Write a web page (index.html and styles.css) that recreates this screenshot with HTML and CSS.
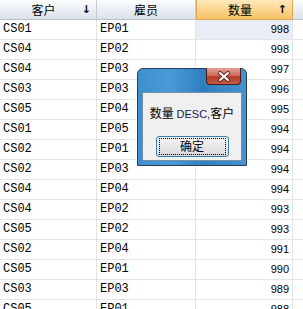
FILE: index.html
```html
<!DOCTYPE html>
<html lang="zh">
<head>
  <meta charset="UTF-8" />
  <title>Grid sort</title>
  <link rel="stylesheet" href="styles.css">
</head>
<body>

  <div class="grid">
    <div class="head">
      <div class="hcell"><span class="label">客户</span><span class="arrow">&#8595;</span></div>
      <div class="hcell"><span class="label">雇员</span></div>
      <div class="hcell sorted"><span class="label">数量</span><span class="arrow">&#8593;</span></div>
      <div class="hcell filler"></div>
    </div>
    <div id="rows"></div>
  </div>

  <div class="msgbox">
    <div class="titlebar">
      <div class="close">
        <svg width="14" height="11" viewBox="0 0 14 11">
          <path d="M3 2 L11 9 M11 2 L3 9" stroke="#6b2a22" stroke-width="4" stroke-linecap="round"/>
          <path d="M3 2 L11 9 M11 2 L3 9" stroke="#fff" stroke-width="2" stroke-linecap="round"/>
        </svg>
      </div>
    </div>
    <div class="msgbody">
      <div class="msgtext">数量 <span class="latin">DESC,</span>客户</div>
      <button class="okbtn"><span>确定</span></button>
    </div>
  </div>

  <script>
    const data = [
      ['CS01', 'EP01', 998],
      ['CS04', 'EP02', 998],
      ['CS04', 'EP03', 997],
      ['CS03', 'EP03', 996],
      ['CS05', 'EP04', 995],
      ['CS01', 'EP05', 994],
      ['CS02', 'EP01', 994],
      ['CS02', 'EP03', 994],
      ['CS04', 'EP04', 994],
      ['CS04', 'EP02', 993],
      ['CS05', 'EP02', 993],
      ['CS02', 'EP04', 991],
      ['CS05', 'EP01', 990],
      ['CS03', 'EP03', 989],
      ['CS05', 'EP01', 988]
    ];

    const rows = document.getElementById('rows');
    data.forEach((r, i) => {
      const row = document.createElement('div');
      row.className = 'row';
      row.innerHTML =
        '<div class="cell">' + r[0] + '</div>' +
        '<div class="cell">' + r[1] + '</div>' +
        '<div class="cell num' + (i === 0 ? ' current' : '') + '">' + r[2] + '</div>' +
        '<div class="cell filler"></div>';
      rows.appendChild(row);
    });
  </script>

</body>
</html>
```

FILE: styles.css
```css
body {
  margin: 0;
  padding: 0;
  background: #fff;
  font-family: 'Noto Sans CJK SC', sans-serif;
  overflow: hidden;
}
.grid {
  width: 303px;
}
.head, .row {
  display: grid;
  grid-template-columns: 97px 99px 97px 10px;
}
.head {
  height: 20px;
}
.hcell {
  display: flex;
  align-items: center;
  box-sizing: border-box;
  padding: 0 5px;
  border-right: 1px solid #c5ccd6;
  border-bottom: 1px solid #b7c0cc;
  background: linear-gradient(#fdfdfe, #e9edf3 55%, #dde3eb);
  font-size: 12px;
  color: #000;
}
.hcell .label {
  flex: 1;
  text-align: center;
}
.hcell .arrow {
  font-family: 'DejaVu Sans', sans-serif;
  font-size: 11px;
  font-weight: bold;
}
.hcell.sorted {
  background: linear-gradient(#fde8bd, #fbd58e 50%, #f6c267);
  border-color: #e2a64d;
  border-left: 1px solid #e2a64d;
}
.hcell.filler {
  border-right: none;
}
.row {
  height: 20px;
}
.cell {
  box-sizing: border-box;
  border-right: 1px solid #e4e4e4;
  border-bottom: 1px solid #e4e4e4;
  padding: 0 3px;
  line-height: 19px;
  font-family: 'Liberation Mono', monospace;
  font-size: 12px;
  color: #000;
}
.cell.num {
  text-align: right;
  font-family: 'Liberation Sans', sans-serif;
  font-size: 11px;
}
.cell.current {
  background: #e9edf5;
}
.cell.filler {
  border-right: none;
}
.msgbox {
  position: absolute;
  left: 137px;
  top: 68px;
  width: 110px;
  height: 98px;
  box-sizing: border-box;
  border: 1px solid #2b3d52;
  border-radius: 6px 6px 0 0;
  padding: 0 4px 4px;
  display: flex;
  flex-direction: column;
  background: linear-gradient(90deg, #3d8fcd, #4b9ad6 30%, #2f7fc0 60%, #4592cf);
}
.titlebar {
  height: 23px;
  position: relative;
}
.close {
  position: absolute;
  right: 1px;
  top: -1px;
  width: 35px;
  height: 17px;
  box-sizing: border-box;
  border: 1px solid #4a1c16;
  border-top: none;
  border-radius: 0 0 4px 4px;
  background: linear-gradient(#e0a296, #cf6e5e 45%, #b33b27 55%, #c45a45);
  display: flex;
  align-items: center;
  justify-content: center;
}
.msgbody {
  flex: 1;
  background: #f0f0f0;
  border: 1px solid #6f8fac;
  display: flex;
  flex-direction: column;
  align-items: center;
}
.msgtext {
  margin-top: 11px;
  font-size: 12px;
  color: #000;
  white-space: nowrap;
}
.msgtext .latin {
  font-family: 'Liberation Sans', sans-serif;
  font-size: 11px;
  color: #1a1a4a;
}
.okbtn {
  margin-top: 15px;
  width: 73px;
  height: 21px;
  padding: 1px 2px;
  box-sizing: border-box;
  border: 1px solid #3c7fb1;
  border-radius: 3px;
  background: linear-gradient(#f4f4f4, #e9e9e9 50%, #d8d8d8);
  font-family: 'Noto Sans CJK SC', sans-serif;
  font-size: 12px;
  color: #000;
}
.okbtn span {
  display: block;
  height: 17px;
  border: 1px dotted #000;
  box-sizing: border-box;
  line-height: 14px;
}
```
